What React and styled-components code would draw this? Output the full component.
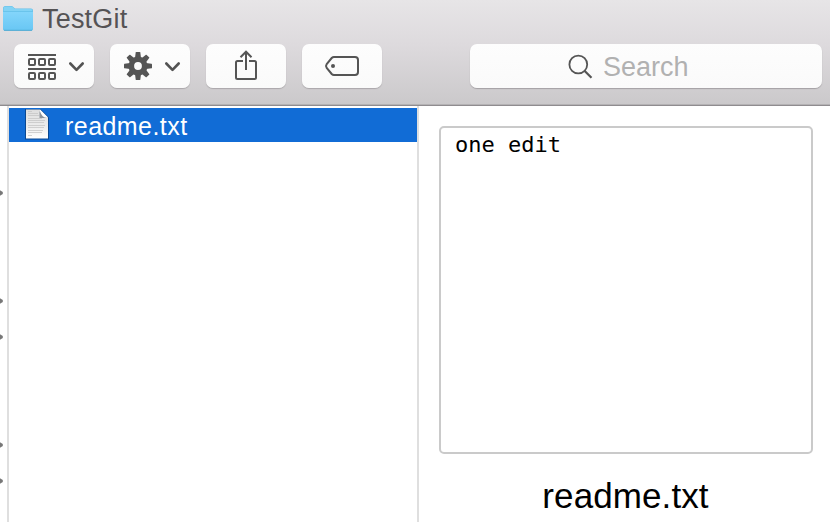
import React from 'react';
import styled, { createGlobalStyle } from 'styled-components';

const GlobalStyle = createGlobalStyle`
  * { box-sizing: border-box; }
  body { margin: 0; background: #fff; overflow: hidden; }
`;

const Window = styled.main`
  width: 830px;
  height: 522px;
  display: flex;
  flex-direction: column;
  overflow: hidden;
  background: #fff;
  font-family: "Liberation Sans", Arial, sans-serif;
`;

const Header = styled.header`
  flex: none;
  height: 106px;
  background: linear-gradient(#e7e5e7 0, #dddadd 45px, #cbc9cb 104px);
  border-bottom: 1px solid #8f8c8f;
  box-shadow: inset 0 -1px #b4b2b4;
`;

const TitleBar = styled.div`
  height: 44px;
  padding: 0 0 6px 2px;
  display: flex;
  align-items: center;
  gap: 8px;
`;

const Title = styled.h1`
  margin: 0;
  font-size: 27px;
  line-height: 38px;
  font-weight: 400;
  letter-spacing: 0.2px;
  color: #555355;
`;

const Toolbar = styled.div`
  display: flex;
  gap: 16px;
  padding-left: 14px;
`;

const ToolButton = styled.button`
  width: 80px;
  height: 44px;
  padding: 0;
  border: 0;
  border-radius: 7px;
  background: linear-gradient(#fdfdfd, #fafafa);
  box-shadow: 0 1px 1px #aaa7aa;
  display: block;
  svg { display: block; }
`;

const SearchField = styled.div`
  width: 352px;
  height: 44px;
  margin-left: 72px;
  padding-left: 98px;
  border-radius: 7px;
  background: linear-gradient(#fdfdfd, #fafafa);
  box-shadow: 0 1px 1px #a3a0a3;
  display: flex;
  align-items: center;
  gap: 9px;
  svg { flex: none; margin-top: 2px; }
`;

const Placeholder = styled.span`
  font-size: 27px;
  line-height: 44px;
  color: #b1b1b1;
  padding-top: 2px;
`;

const Browser = styled.div`
  flex: 1;
  min-height: 0;
  display: flex;
`;

const ParentColumn = styled.div`
  width: 9px;
  padding-top: 33px;
  border-right: 2px solid #dfdfdf;
`;

const ParentRow = styled.div`
  height: 36px;
  display: flex;
  align-items: center;
`;

const FileColumn = styled.div`
  width: 410px;
  padding-top: 2px;
  border-right: 2px solid #dfdfdf;
`;

const FileRow = styled.div`
  height: 34px;
  padding-left: 14px;
  display: flex;
  align-items: center;
  gap: 14px;
  background: #116cd6;
  color: #fff;
  svg { margin-bottom: 2px; }
`;

const FileName = styled.span`
  font-size: 25px;
  line-height: 34px;
  letter-spacing: 0.45px;
  padding-top: 2px;
`;

const PreviewColumn = styled.section`
  flex: 1;
  padding: 20px 17px 0 20px;
`;

const Preview = styled.pre`
  margin: 0;
  height: 328px;
  padding: 4px 14px;
  border: 2px solid #cacaca;
  border-radius: 5px;
  color: #000;
  font: 22px/26px "DejaVu Sans Mono", monospace;
`;

const PreviewName = styled.div`
  margin-top: 21px;
  text-align: center;
  font-size: 35px;
  line-height: 42px;
  letter-spacing: 0.1px;
  padding-right: 1px;
  color: #000;
`;

const FolderIcon = () => (
  <svg width="32" height="38" viewBox="0 0 32 38">
    <defs>
      <linearGradient id="folder" x2="0" y2="1">
        <stop stopColor="#83d5fb" /><stop offset="1" stopColor="#69c7f4" />
      </linearGradient>
    </defs>
    <path d="M1 29V8.5Q1 6 3.5 6H10l3 2.5H29Q31 8.500 31 10.500V29Q31 30.500 29 30.500H3Q1 30.500 1 29Z" fill="#62bfe9" />
    <path d="M1.500 11V8.500Q1.500 6.500 3.500 6.500H10l3 2.500H29Q30.500 9 30.500 11Z" fill="#82d3f5" />
    <path d="M1 12H31V28Q31 30 29 30H3Q1 30 1 28Z" fill="url(#folder)" />
    <path d="M1 11.500H31" stroke="#6ac4ec" />
    <path d="M2 30.300H30" stroke="#4da9d3" />
  </svg>
);

const Chevron = () => (
  <path d="M56.300 19.500l6.200 6.300 6.200-6.300" fill="none" stroke="#535353" strokeWidth="2.600" strokeLinecap="round" strokeLinejoin="round" />
);

const ArrangeIcon = () => (
  <svg width="80" height="44">
    <path d="M14 11h28M14 25h28" stroke="#555" strokeWidth="2" />
    <g fill="none" stroke="#555" strokeWidth="2">
      {[15, 25, 35].map((x) => (
        <React.Fragment key={x}>
          <rect x={x} y="15" width="6" height="6" rx="1" />
          <rect x={x} y="29" width="6" height="6" rx="1" />
        </React.Fragment>
      ))}
    </g>
    <Chevron />
  </svg>
);

const GearIcon = () => (
  <svg width="80" height="44">
    <g transform="translate(28 22)">
      <g fill="#555">
        {[0, 45, 90, 135, 180, 225, 270, 315].map((a) => (
          <path key={a} d="M-3-8L-2.300-13.500Q-2.200-14-1.700-14H1.700Q2.200-14 2.300-13.500L3-8Z" transform={`rotate(${a})`} />
        ))}
      </g>
      <circle r="6.700" fill="none" stroke="#555" strokeWidth="5.600" />
    </g>
    <Chevron />
  </svg>
);

const ShareIcon = () => (
  <svg width="80" height="44" fill="none" stroke="#555" strokeWidth="2">
    <path d="M37 17H31.500Q30 17 30 18.500V33.500Q30 35 31.500 35H48.500Q50 35 50 33.500V18.500Q50 17 48.500 17H43" />
    <path d="M40 26V8M34.500 13.300L40 7.700l5.500 5.600" />
  </svg>
);

const TagIcon = () => (
  <svg width="80" height="44">
    <path d="M32 13H53Q56 13 56 16V28Q56 31 53 31H32Q30.700 31 29.700 30L24.700 24Q23.300 22 24.700 20L29.700 14Q30.700 13 32 13Z" fill="none" stroke="#555" strokeWidth="2" />
    <circle cx="31" cy="22" r="2" fill="#555" />
  </svg>
);

const SearchIcon = () => (
  <svg width="26" height="26" fill="none" stroke="#555">
    <circle cx="10.300" cy="10.500" r="8.900" strokeWidth="1.800" />
    <path d="M16.500 16.700L23.500 23.700" strokeWidth="2.200" />
  </svg>
);

const TextFileIcon = () => (
  <svg width="28" height="32" viewBox="0 0 28 32">
    <defs>
      <linearGradient id="paper" x2="0" y2="1">
        <stop stopColor="#dedede" /><stop offset=".6" stopColor="#ededed" /><stop offset="1" stopColor="#fff" />
      </linearGradient>
    </defs>
    <path d="M2 1H17.500L26 9.500V31.500H2Z" fill="#073e80" opacity=".8" />
    <path d="M3 1.500H17L25 9.500V30.500H3Z" fill="url(#paper)" />
    <path d="M5 3.500h4M5 5.500h10M5 7.500h11M5 10.500h14M5 12.500h17M5 14.500h16M5 17.500h17M5 19.500h16M5 22.500h15M5 24.500h14M5 27.500h4" stroke="#c6c6c6" strokeWidth=".8" />
    <path d="M17 1.500V9.500H25Z" fill="#fff" />
    <path d="M16.500 3.500V10H24Q19 9.500 17 3.500Z" fill="#8d949c" />
  </svg>
);

const Disclosure = () => (
  <svg width="3" height="8"><path d="M0 1.300L2.800 3 V5L0 6.700Z" fill="#777" /></svg>
);

const FOLDER_ROWS = [false, true, false, false, true, true, false, false, true, true];

export default function App() {
  return (
    <Window>
      <GlobalStyle />
      <Header>
        <TitleBar><FolderIcon /><Title>TestGit</Title></TitleBar>
        <Toolbar>
          <ToolButton aria-label="Arrange"><ArrangeIcon /></ToolButton>
          <ToolButton aria-label="Action"><GearIcon /></ToolButton>
          <ToolButton aria-label="Share"><ShareIcon /></ToolButton>
          <ToolButton aria-label="Tags"><TagIcon /></ToolButton>
          <SearchField><SearchIcon /><Placeholder>Search</Placeholder></SearchField>
        </Toolbar>
      </Header>
      <Browser>
        <ParentColumn>
          {FOLDER_ROWS.map((folder, i) => <ParentRow key={i}>{folder && <Disclosure />}</ParentRow>)}
        </ParentColumn>
        <FileColumn>
          <FileRow><TextFileIcon /><FileName>readme.txt</FileName></FileRow>
        </FileColumn>
        <PreviewColumn>
          <Preview>one edit</Preview>
          <PreviewName>readme.txt</PreviewName>
        </PreviewColumn>
      </Browser>
    </Window>
  );
}
